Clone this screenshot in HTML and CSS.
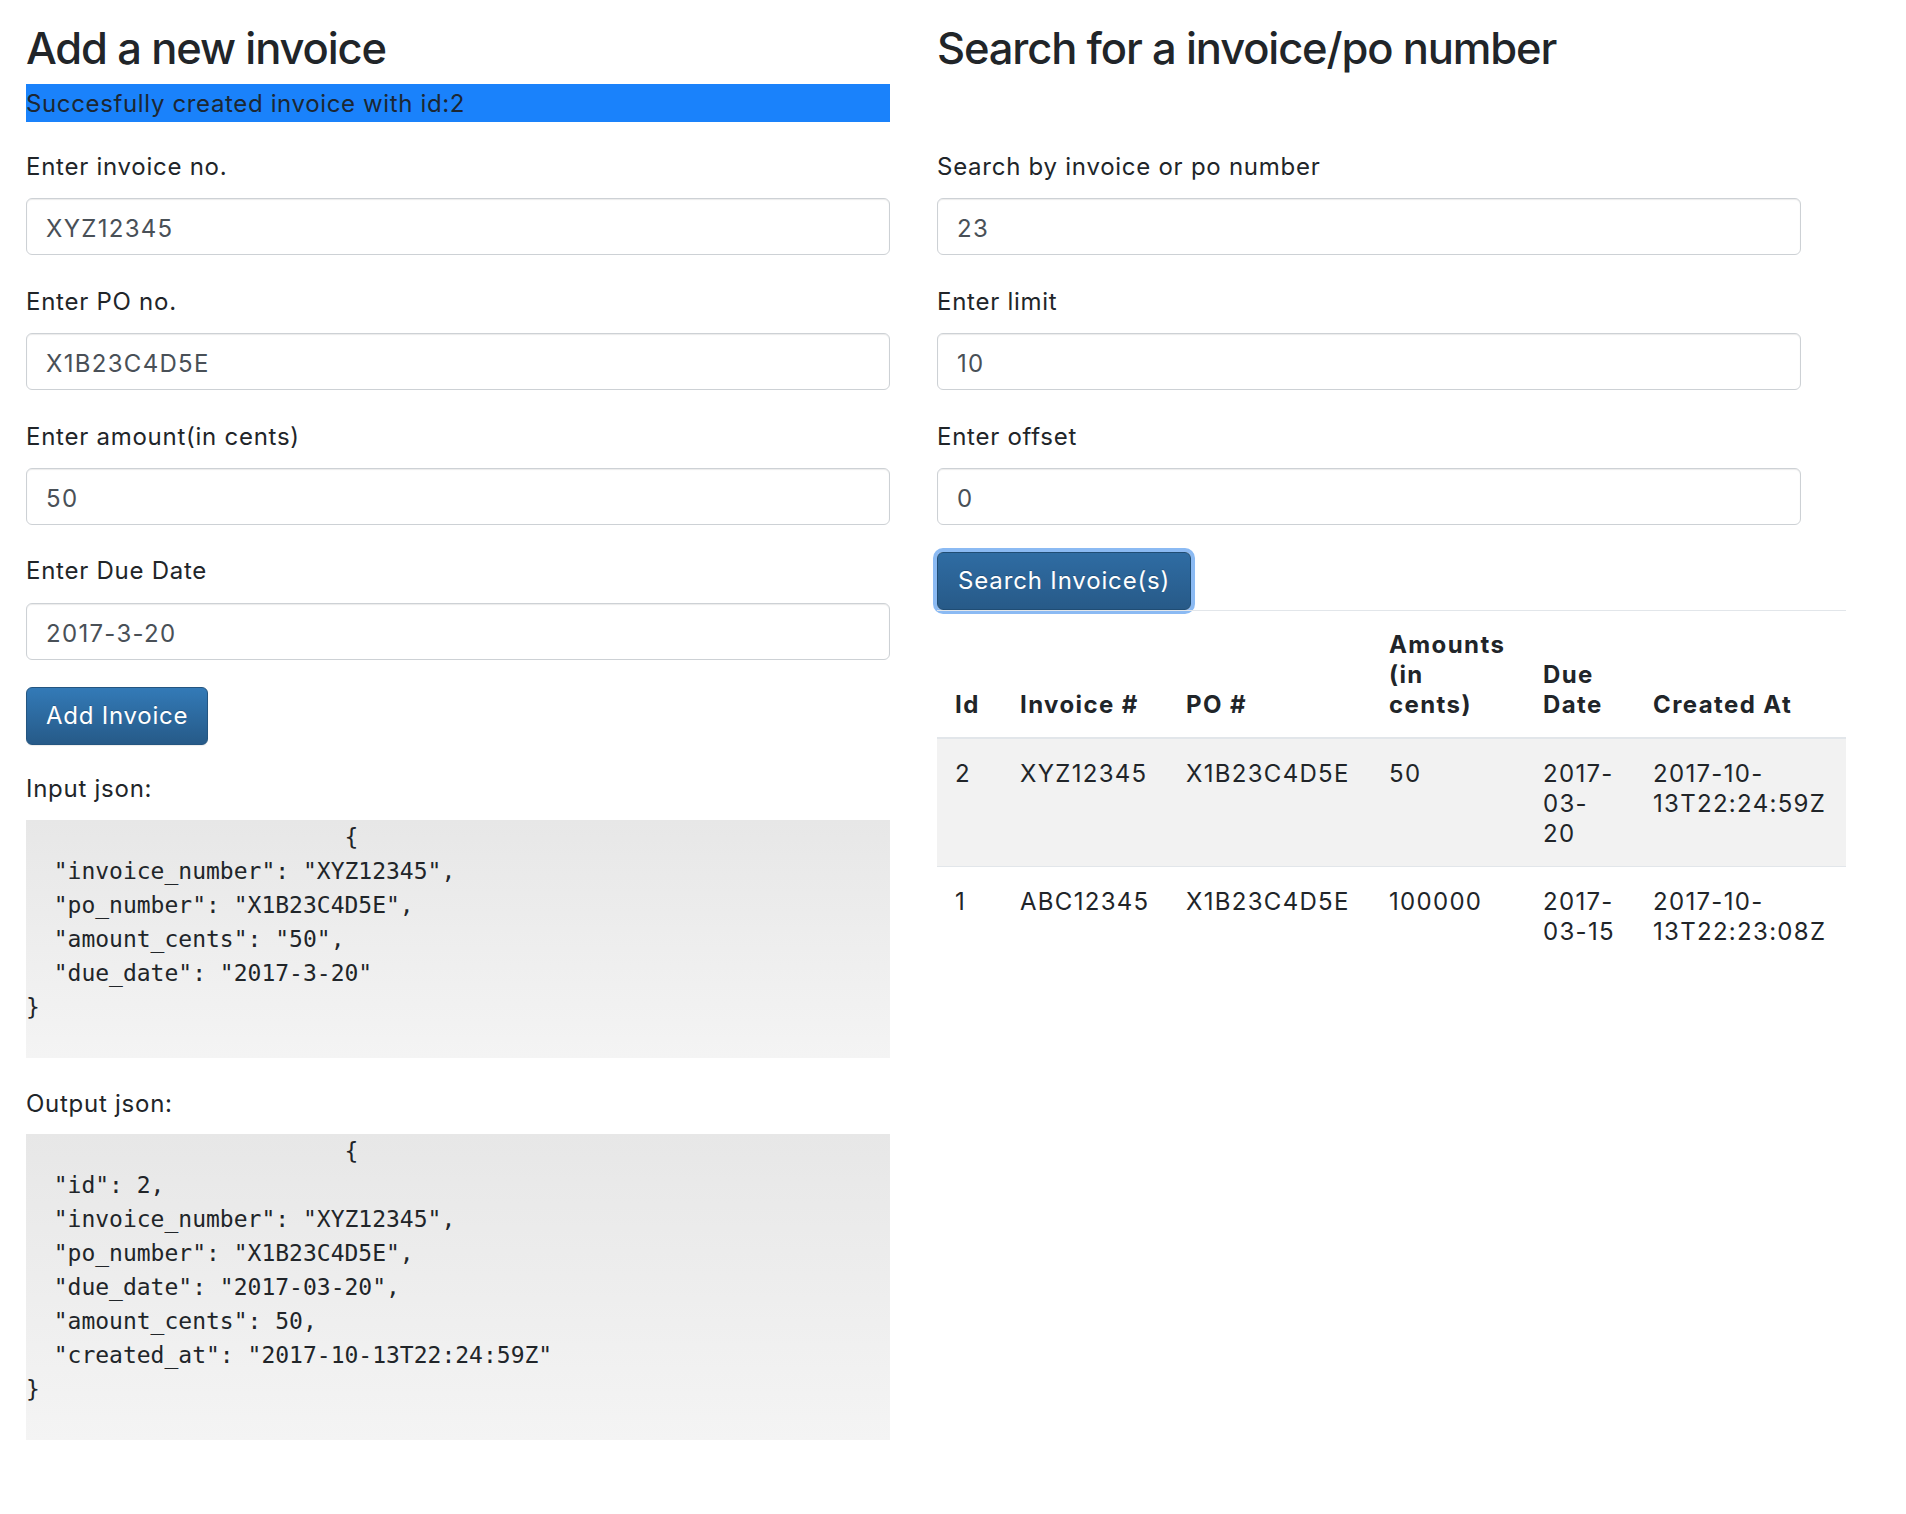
FILE: index.html
```
<!DOCTYPE html>
<html lang="en">
<head>
<meta charset="utf-8">
<title>Invoices</title>
<link rel="stylesheet" href="styles.css">
</head>
<body>
<div class="page">
  <section class="column">
    <h1 class="title">Add a new invoice</h1>
    <div class="alert">Succesfully created invoice with id:2</div>
    <form class="form">
      <div class="group">
        <label class="label" for="invoice-no">Enter invoice no.</label>
        <input class="input" id="invoice-no" type="text" value="XYZ12345">
      </div>
      <div class="group">
        <label class="label" for="po-no">Enter PO no.</label>
        <input class="input" id="po-no" type="text" value="X1B23C4D5E">
      </div>
      <div class="group">
        <label class="label" for="amount">Enter amount(in cents)</label>
        <input class="input" id="amount" type="text" value="50">
      </div>
      <div class="group">
        <label class="label" for="due-date">Enter Due Date</label>
        <input class="input" id="due-date" type="text" value="2017-3-20">
      </div>
      <button class="btn" type="button">Add Invoice</button>
    </form>
    <div class="json-block">
      <div class="label">Input json:</div>
<pre class="json">                       {
  "invoice_number": "XYZ12345",
  "po_number": "X1B23C4D5E",
  "amount_cents": "50",
  "due_date": "2017-3-20"
}</pre>
    </div>
    <div class="json-block">
      <div class="label">Output json:</div>
<pre class="json">                       {
  "id": 2,
  "invoice_number": "XYZ12345",
  "po_number": "X1B23C4D5E",
  "due_date": "2017-03-20",
  "amount_cents": 50,
  "created_at": "2017-10-13T22:24:59Z"
}</pre>
    </div>
  </section>

  <section class="column">
    <h1 class="title">Search for a invoice/po number</h1>
    <div class="alert-spacer"></div>
    <form class="form">
      <div class="group">
        <label class="label" for="query">Search by invoice or po number</label>
        <input class="input" id="query" type="text" value="23">
      </div>
      <div class="group">
        <label class="label" for="limit">Enter limit</label>
        <input class="input" id="limit" type="text" value="10">
      </div>
      <div class="group">
        <label class="label" for="offset">Enter offset</label>
        <input class="input" id="offset" type="text" value="0">
      </div>
      <button class="btn btn-focus" type="button">Search Invoice(s)</button>
    </form>
    <table class="table">
      <thead>
        <tr>
          <th class="c-id">Id</th>
          <th class="c-inv">Invoice #</th>
          <th class="c-po">PO #</th>
          <th class="c-amt">Amounts<br>(in<br>cents)</th>
          <th class="c-due">Due<br>Date</th>
          <th class="c-created">Created At</th>
        </tr>
      </thead>
      <tbody>
        <tr>
          <td>2</td>
          <td>XYZ12345</td>
          <td>X1B23C4D5E</td>
          <td>50</td>
          <td>2017-<br>03-<br>20</td>
          <td>2017-10-<br>13T22:24:59Z</td>
        </tr>
        <tr>
          <td>1</td>
          <td>ABC12345</td>
          <td>X1B23C4D5E</td>
          <td>100000</td>
          <td>2017-<br>03-15</td>
          <td>2017-10-<br>13T22:23:08Z</td>
        </tr>
      </tbody>
    </table>
  </section>
</div>
</body>
</html>
```

FILE: styles.css
```
* {
  box-sizing: border-box;
}

html, body {
  margin: 0;
  padding: 0;
  background: #ffffff;
}

body {
  font-family: Inter, "Noto Sans", "Liberation Sans", sans-serif;
  font-size: 24px;
  letter-spacing: 0.7px;
  color: #212529;
}

.page {
  display: grid;
  grid-template-columns: 909px 909px;
  column-gap: 2px;
  padding: 22px 0 60px 26px;
  align-items: start;
}

.column {
  display: flex;
  flex-direction: column;
  align-items: flex-start;
}

.title {
  margin: 0 0 10px;
  font-size: 43.5px;
  line-height: 52px;
  font-weight: 500;
  letter-spacing: -1.15px;
  color: #212529;
}

.alert {
  width: 864px;
  height: 38px;
  padding-top: 1px;
  line-height: 37px;
  background: #1a82fb;
  color: #1c2733;
  margin-bottom: 26px;
  letter-spacing: 0.64px;
  white-space: nowrap;
}

.alert-spacer {
  height: 38px;
  margin-bottom: 26px;
}

.form {
  display: flex;
  flex-direction: column;
  align-items: flex-start;
  width: 100%;
}

.group {
  display: flex;
  flex-direction: column;
  align-items: flex-start;
  margin-bottom: 27.2px;
}

.label {
  display: block;
  padding-top: 1.2px;
  line-height: 36px;
  margin-bottom: 13.3px;
  letter-spacing: 0.74px;
}

.input {
  width: 864px;
  height: 57px;
  padding: 4px 19px 0;
  font-family: inherit;
  font-size: 24px;
  letter-spacing: 1.3px;
  color: #495057;
  background: #ffffff;
  border: 1px solid #cdd1d5;
  border-radius: 6px;
  box-shadow: inset 0 1px 1px rgba(0, 0, 0, 0.08);
  outline: none;
}

.btn {
  height: 58px;
  padding: 0 19px;
  font-family: inherit;
  font-size: 24px;
  letter-spacing: 0.75px;
  line-height: 56px;
  color: #ffffff;
  background: linear-gradient(to bottom, #337ab7 0%, #265a88 100%);
  border: 1px solid #245580;
  border-radius: 6px;
  text-shadow: 0 -1px 0 rgba(0, 0, 0, 0.2);
  box-shadow: 0 1px 1px rgba(0, 0, 0, 0.08);
  cursor: pointer;
}

.btn-focus {
  padding: 0 20px;
  letter-spacing: 0.85px;
  background: linear-gradient(to bottom, #2f6ca3 0%, #275a88 100%);
  border-color: #204d74;
  box-shadow: 0 0 0 4px #8bbaf3;
}

.json-block {
  margin-top: 25.5px;
  width: 864px;
}

.json-block + .json-block {
  margin-top: 27px;
}

.json-block .label {
  margin-bottom: 12.3px;
}

.json {
  margin: 0;
  padding: 0 0 34px;
  font-family: "DejaVu Sans Mono", "Liberation Mono", monospace;
  font-size: 23px;
  line-height: 34px;
  letter-spacing: 0;
  color: #212529;
  background: linear-gradient(to bottom, #e7e7e7 0%, #f4f4f4 100%);
  white-space: pre;
}

.table {
  width: 909px;
  border-collapse: collapse;
  table-layout: fixed;
  line-height: 30px;
}

.table th,
.table td {
  padding: 18px;
  text-align: left;
  border-top: 1px solid #e2e6ea;
}

.table th {
  padding-top: 19px;
  padding-bottom: 17px;
  vertical-align: bottom;
  font-weight: 700;
  letter-spacing: 1.4px;
  border-bottom: 2px solid #e2e6ea;
}

.table td {
  padding-top: 19.5px;
  padding-bottom: 17.5px;
  vertical-align: top;
  letter-spacing: 1.3px;
}

.table tbody tr:nth-child(odd) {
  background: #f2f2f2;
}

.c-id { width: 65px; }
.c-inv { width: 166px; }
.c-po { width: 203px; }
.c-amt { width: 154px; }
.c-due { width: 110px; }
.c-created { width: 211px; }
```
